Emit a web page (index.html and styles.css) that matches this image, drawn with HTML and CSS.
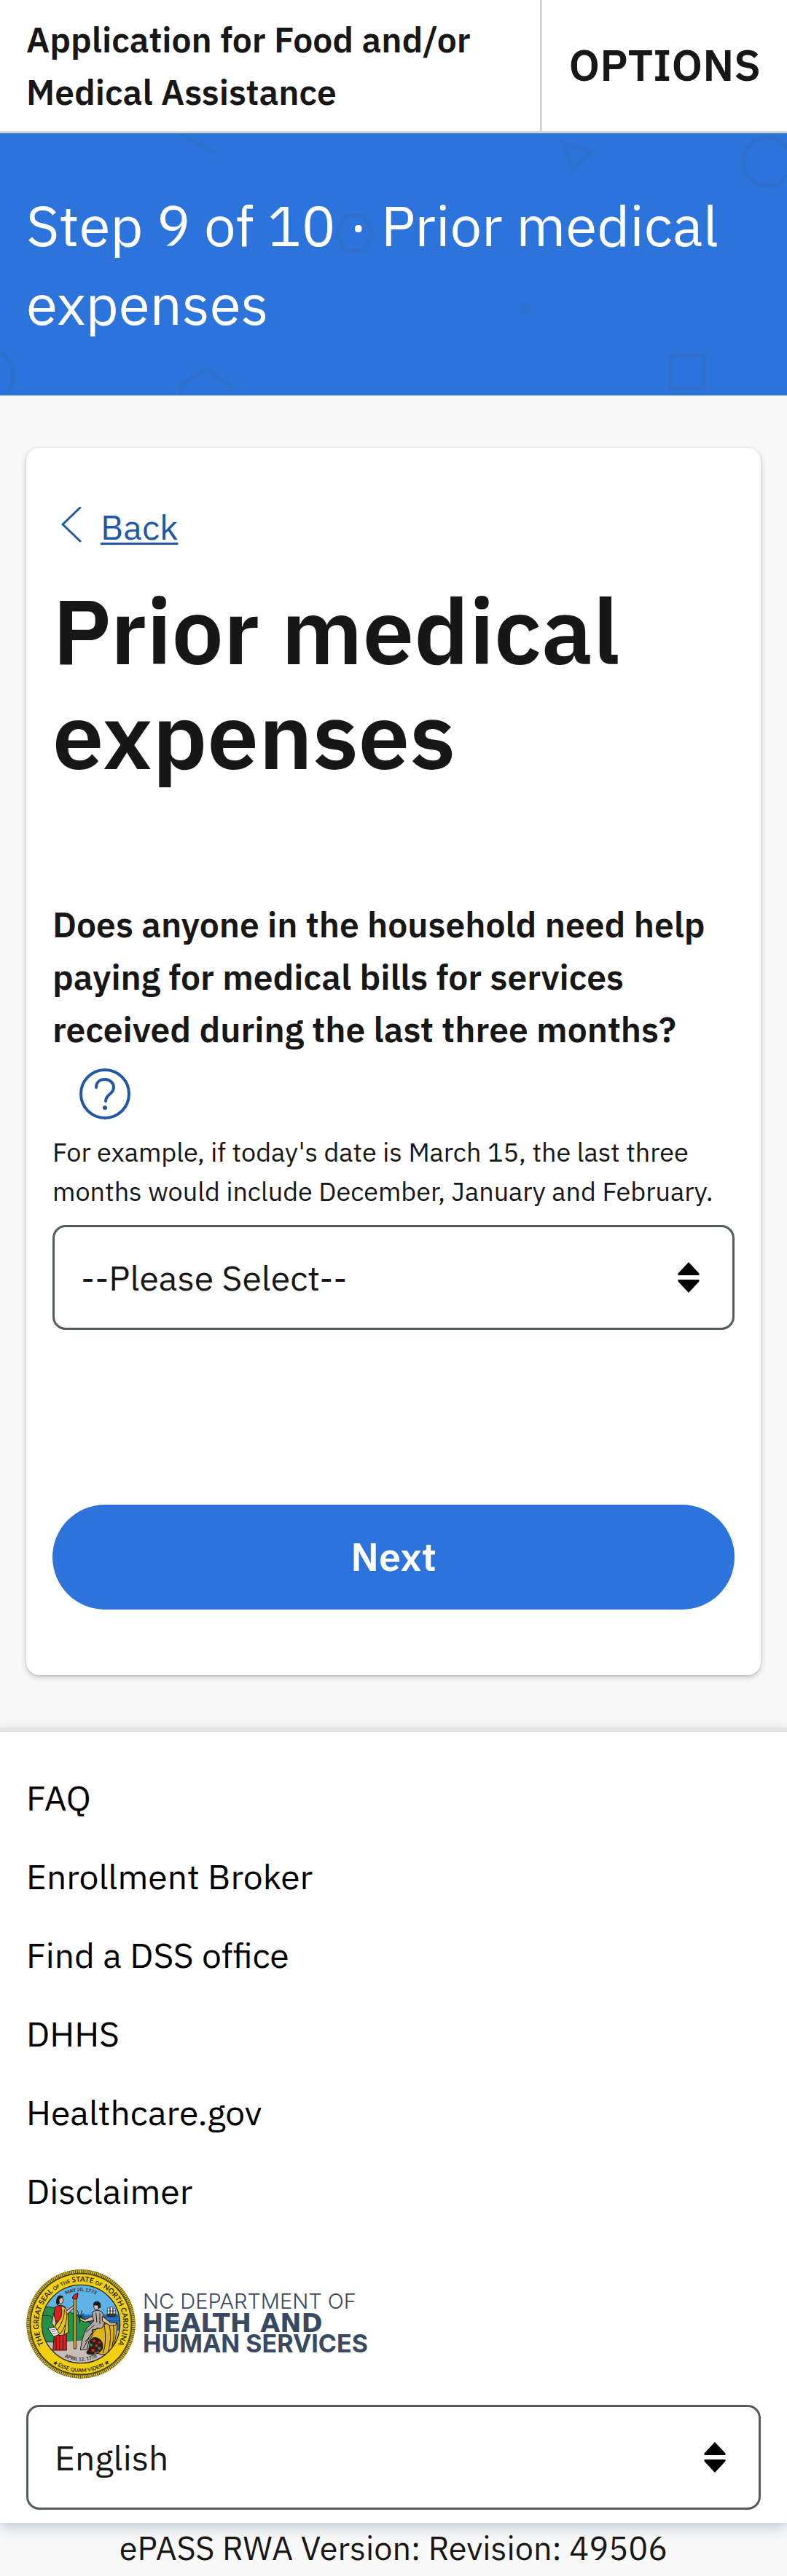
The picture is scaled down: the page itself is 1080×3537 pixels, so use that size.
FILE: index.html
```html
<!DOCTYPE html>
<html lang="en">
<head>
<meta charset="utf-8">
<meta name="viewport" content="width=device-width, initial-scale=1">
<title>Prior medical expenses - Application for Food and/or Medical Assistance</title>
<link rel="stylesheet" href="styles.css">
</head>
<body>
<header class="topbar">
  <div class="topbar-title">Application for Food and/or Medical Assistance</div>
  <button type="button" class="topbar-options">OPTIONS</button>
</header>

<section class="banner">
  <svg class="banner-shapes" width="1080" height="360" viewBox="0 0 1080 360" aria-hidden="true">
    <g fill="none" stroke="#2d70ce" stroke-width="6" stroke-linecap="round">
      <path d="M249 2 291 24"/>
      <path d="M3 303Q28 324 12 355"/>
      <path d="M461 138 474 114H499L512 138 499 162H474Z"/>
      <path d="M253 368 247 348 282 323 318 348 312 368"/>
      <path d="M773 14 812 26 785 49Z" stroke-linecap="butt"/>
      <circle cx="1053" cy="39" r="33"/>
      <path d="M921 306H966V351H921Z"/>
    </g>
    <g fill="#2d70ce">
      <circle cx="101" cy="113" r="8"/>
      <circle cx="722" cy="241" r="8"/>
    </g>
  </svg>
  <p class="banner-text">Step 9 of 10 · Prior medical expenses</p>
</section>

<main class="main">
  <form class="card">
    <a class="back" href="#">
      <svg class="back-icon" width="54" height="54" viewBox="0 0 54 54" aria-hidden="true"><path d="M38 1 14 24 38 47" fill="none" stroke="#2057a7" stroke-width="3" stroke-linecap="round" stroke-linejoin="round"/></svg>
      <span class="back-label">Back</span>
    </a>
    <h1 class="title">Prior medical expenses</h1>
    <label class="question" for="bills">Does anyone in the household need help paying for medical bills for services received during the last three months?</label>
    <button type="button" class="help" aria-label="Help">
      <svg class="help-icon" width="72" height="72" viewBox="0 0 72 72" aria-hidden="true">
        <g fill="none" stroke="#2057a7" stroke-width="4" stroke-linecap="round">
          <circle cx="36" cy="36" r="33"/>
          <path d="M24 27C24 20 29 16 36 16S48 21 48 27C48 37 37 36 37 46"/>
        </g>
        <circle cx="36" cy="55" r="3" fill="#2057a7"/>
      </svg>
    </button>
    <p class="hint" id="hint">For example, if today's date is March 15, the last three months would include December, January and February.</p>
    <div class="select">
      <select class="select-field" id="bills" aria-describedby="hint">
        <option>--Please Select--</option>
        <option>Yes</option>
        <option>No</option>
      </select>
      <svg class="select-arrows" width="30" height="42" viewBox="0 0 30 42" aria-hidden="true"><path d="M15 0 29 15Q31 18 28 18H2Q-1 18 1 15ZM15 42 29 27Q31 24 28 24H2Q-1 24 1 27Z"/></svg>
    </div>
    <button type="submit" class="next">Next</button>
  </form>
</main>

<footer class="footer">
  <ul class="links">
    <li><a class="link" href="#">FAQ</a></li>
    <li><a class="link" href="#">Enrollment Broker</a></li>
    <li><a class="link" href="#">Find a DSS office</a></li>
    <li><a class="link" href="#">DHHS</a></li>
    <li><a class="link" href="#">Healthcare.gov</a></li>
    <li><a class="link" href="#">Disclaimer</a></li>
  </ul>
  <svg class="logo" width="480" height="150" viewBox="0 0 480 150" role="img" aria-label="NC Department of Health and Human Services">
    <svg x="0" y="0" width="150" height="150" viewBox="49 51 450 450">
      <defs>
        <clipPath id="disc"><circle cx="274" cy="276" r="160"/></clipPath>
        <path id="arc-name" d="M141 388A174 174 0 1 1 407 388"/>
        <path id="arc-motto" d="M95 361A198 198 0 0 0 453 361"/>
        <path id="arc-may" d="M139 276A135 135 0 0 1 409 276"/>
        <path id="arc-april" d="M122 276A152 152 0 0 0 426 276"/>
      </defs>
      <circle cx="274" cy="276" r="224" fill="#4a4218"/>
      <circle cx="274" cy="276" r="217" fill="none" stroke="#d9bf1b" stroke-width="12" stroke-dasharray="5 3"/>
      <circle cx="274" cy="276" r="207" fill="#f0d010" stroke="#4a4218" stroke-width="3"/>
      <circle cx="274" cy="276" r="161" fill="#5fb2e6"/>
      <g clip-path="url(#disc)">
        <path d="M262 237H440V330H262Z" fill="#2375c4"/>
        <path d="M265 245H300M330 246H440M270 256H320M370 262H440M300 268H350" stroke="#174d8c" stroke-width="3"/>
        <path d="M104 230Q122 196 158 208L240 232Q300 252 322 284L300 350H104Z" fill="#25904a" stroke="#143d20" stroke-width="3"/>
        <path d="M112 244Q150 232 165 262" fill="none" stroke="#143d20" stroke-width="3"/>
        <path d="M104 345Q170 362 220 348L310 342 440 300V440H104Z" fill="#c5bdb6"/>
        <g stroke="#1d1a16" stroke-width="2">
          <path d="M380 236H420L414 246H386Z" fill="#3b342c"/>
          <path d="M383 210H393V234H383ZM395 206H405V234H395ZM407 211H416V234H407Z" fill="#f4f2ee"/>
          <path d="M383 222H416" fill="none"/>
        </g>
        <g stroke="#1d1a16" stroke-width="3" stroke-linejoin="round">
          <path d="M165 314 159 384H215L214 310Z" fill="#dc2020"/>
          <path d="M172 382V330M186 384V326M200 384V328" fill="none"/>
          <path d="M168 206Q190 192 210 206L218 240 196 268 158 262Z" fill="#dc2020"/>
          <path d="M192 202Q214 204 221 232L222 310Q196 332 164 318Q158 288 184 262Q202 240 192 202Z" fill="#e9c31a"/>
          <path d="M206 215Q208 260 174 306M216 228Q220 276 188 318M212 280 204 322" fill="none"/>
          <path d="M162 232 154 272 166 292 172 270Z" fill="#e6bd98"/>
          <path d="M212 224 242 202 247 196 250 204 218 236Z" fill="#e6bd98"/>
          <path d="M138 294 168 288 186 318 162 328Z" fill="#fff"/>
          <path d="M148 301 168 297M153 308 173 304M159 316 177 312" stroke-width="2"/>
          <ellipse cx="191" cy="178" rx="10" ry="15" fill="#e6bd98"/>
          <path d="M201 164Q184 152 176 170Q170 188 178 198 188 190 184 176Q190 166 201 164Z" fill="#1d1a16"/>
          <path d="M245 172H254V378H245Z" fill="#e5b918"/>
          <path d="M240 172Q238 154 262 149L260 166 257 174Z" fill="#dc2020"/>
        </g>
        <g stroke="#1d1a16" stroke-width="3" stroke-linejoin="round">
          <path d="M318 304Q322 278 424 270 424 330 396 396 354 410 320 386 300 346 318 304Z" fill="#e0b41b"/>
          <path d="M370 280Q382 340 366 396M390 276Q404 330 386 392M406 272Q416 310 402 370" fill="none"/>
          <path d="M320 228Q340 212 362 228L376 262 362 292 320 300 322 322 306 348 300 382H272Q280 322 298 294L326 266Z" fill="#b3aaa3"/>
          <path d="M336 230 340 270M352 232 352 276M330 280 294 310M344 290 290 350M326 300 284 376" fill="none"/>
          <path d="M322 244 290 258 272 250 268 258 290 268 326 262Z" fill="#e6bd98"/>
          <path d="M362 244 398 272 420 270 418 280 394 282 362 264Z" fill="#e6bd98"/>
          <ellipse cx="338" cy="203" rx="11" ry="14" fill="#e6bd98"/>
          <path d="M326 198Q326 182 344 184 358 188 354 208L346 210 344 198Z" fill="#1d1a16"/>
          <path d="M270 272 266 240M272 262 260 220M272 250 278 220M266 250 258 236M274 248 286 232" fill="none"/>
          <path d="M312 348Q320 326 344 334 370 348 362 380 346 406 304 400 290 394 306 382 Z" fill="#2b2018"/>
        </g>
        <g fill="#dc2020"><circle cx="328" cy="346" r="6"/><circle cx="338" cy="366" r="6"/><circle cx="324" cy="384" r="7"/><circle cx="350" cy="352" r="5"/><circle cx="344" cy="392" r="5"/></g>
        <g fill="#25904a"><circle cx="316" cy="362" r="6"/><circle cx="350" cy="376" r="6"/><circle cx="334" cy="396" r="5"/></g>
      </g>
      <circle cx="274" cy="276" r="161" fill="none" stroke="#2b2610" stroke-width="4"/>
      <g class="seal-text">
        <text class="seal-name" text-anchor="middle"><textPath href="#arc-name" startOffset="50%">THE GREAT SEAL <tspan class="seal-minor">OF THE</tspan> STATE <tspan class="seal-minor">OF</tspan> NORTH CAROLINA</textPath></text>
        <text class="seal-motto" text-anchor="middle"><textPath href="#arc-motto" startOffset="50%">★ ESSE QUAM VIDERI ★</textPath></text>
        <text class="seal-date" text-anchor="middle"><textPath href="#arc-may" startOffset="50%">MAY 20, 1775</textPath></text>
        <text class="seal-date" text-anchor="middle"><textPath href="#arc-april" startOffset="50%">APRIL 12, 1776</textPath></text>
      </g>
    </svg>
    <g fill="#384a61">
      <text class="logo-top" x="160" y="54">NC DEPARTMENT OF</text>
      <text class="logo-mid" x="159" y="86">HEALTH AND</text>
      <text class="logo-low" x="160" y="114">HUMAN SERVICES</text>
    </g>
  </svg>
  <div class="select">
    <select class="select-field" aria-label="Language">
      <option>English</option>
      <option>Español</option>
    </select>
    <svg class="select-arrows" width="30" height="42" viewBox="0 0 30 42" aria-hidden="true"><path d="M15 0 29 15Q31 18 28 18H2Q-1 18 1 15ZM15 42 29 27Q31 24 28 24H2Q-1 24 1 27Z"/></svg>
  </div>
</footer>
<p class="version">ePASS RWA Version: Revision: 49506</p>
</body>
</html>
```
FILE: styles.css
```css
* {
  box-sizing: border-box;
}

body {
  margin: 0;
  background: #f9f9f9;
  color: #171717;
  font-family: "IBM Plex Sans", Roboto, sans-serif;
  font-size: 48px;
  line-height: 72px;
}

h1, p, ul {
  margin: 0;
  padding: 0;
}

button, select {
  margin: 0;
  font: inherit;
  color: inherit;
}

/* Top bar */
.topbar {
  display: flex;
  background: #fff;
  border-bottom: 3px solid #cfd9d9;
}

.topbar-title {
  flex: 1;
  padding: 18px 36px;
  font-weight: 600;
}

.topbar-options {
  padding: 0 36px 2px;
  border: 0;
  border-left: 3px solid #cfd9d9;
  background: none;
  font-size: 60px;
  font-weight: 600;
}

/* Step banner */
.banner {
  position: relative;
  overflow: hidden;
  padding: 72px 36px;
  background: #2c74db;
  color: #fff;
}

.banner-shapes {
  position: absolute;
  top: 0;
  left: 0;
}

.banner-text {
  position: relative;
  font-size: 78px;
  line-height: 108px;
}

/* Card with the question */
.main {
  padding: 72px 36px;
}

.card {
  display: flex;
  flex-direction: column;
  padding: 72px 36px 90px;
  border-radius: 18px;
  background: #fff;
  box-shadow: 0 3px 9px rgba(0, 0, 0, 0.2), 0 1px 3px rgba(0, 0, 0, 0.12);
}

.back {
  display: flex;
  align-items: center;
  align-self: flex-start;
  gap: 12px;
  color: #2057a7;
  text-decoration: none;
}

.back-label {
  text-decoration: underline;
  text-decoration-thickness: 3px;
  text-underline-offset: 4px;
}

.title {
  margin-top: 34px;
  font-size: 126px;
  font-weight: 600;
  line-height: 144px;
}

.question {
  margin-top: 152px;
  font-weight: 600;
}

.help {
  align-self: flex-start;
  margin: 17px 36px;
  padding: 0;
  border: 0;
  background: none;
}

.help-icon {
  display: block;
}

.hint {
  margin-bottom: 19px;
  font-size: 36px;
  line-height: 54px;
}

.select {
  position: relative;
}

.select-field {
  display: block;
  width: 100%;
  height: 144px;
  padding: 0 96px 0 36px;
  border: 3px solid #535c5b;
  border-radius: 18px;
  background: #fff;
  appearance: none;
}

.select-arrows {
  position: absolute;
  top: 51px;
  right: 48px;
  pointer-events: none;
}

.next {
  height: 144px;
  margin-top: 240px;
  padding: 0 0 3px;
  border: 0;
  border-radius: 72px;
  background: #2c74db;
  color: #fff;
  font-size: 54px;
  font-weight: 600;
}

/* Footer */
.footer {
  padding: 36px 36px 18px;
  border-top: 6px solid #e4e4e4;
  background: #fff;
  box-shadow: 0 6px 18px rgba(56, 84, 122, 0.3);
}

.links {
  list-style: none;
}

.link {
  display: block;
  color: #000;
  line-height: 108px;
  text-decoration: none;
}

.logo {
  display: block;
  margin: 54px 0 36px;
}

.logo-top {
  font: 300 29px Inter, sans-serif;
}

.logo-mid {
  font: bold 35px "DejaVu Sans", sans-serif;
}

.logo-low {
  font: bold 34px Inter, sans-serif;
}

.seal-text {
  fill: #2b2610;
  font-family: Lato, sans-serif;
  font-weight: bold;
}

.seal-name {
  font-size: 30px;
}

.seal-minor {
  font-size: 21px;
}

.seal-motto {
  font-size: 22px;
}

.seal-date {
  font-size: 20px;
}

.version {
  padding-bottom: 4px;
  font-size: 45px;
  line-height: 68px;
  text-align: center;
}
```
